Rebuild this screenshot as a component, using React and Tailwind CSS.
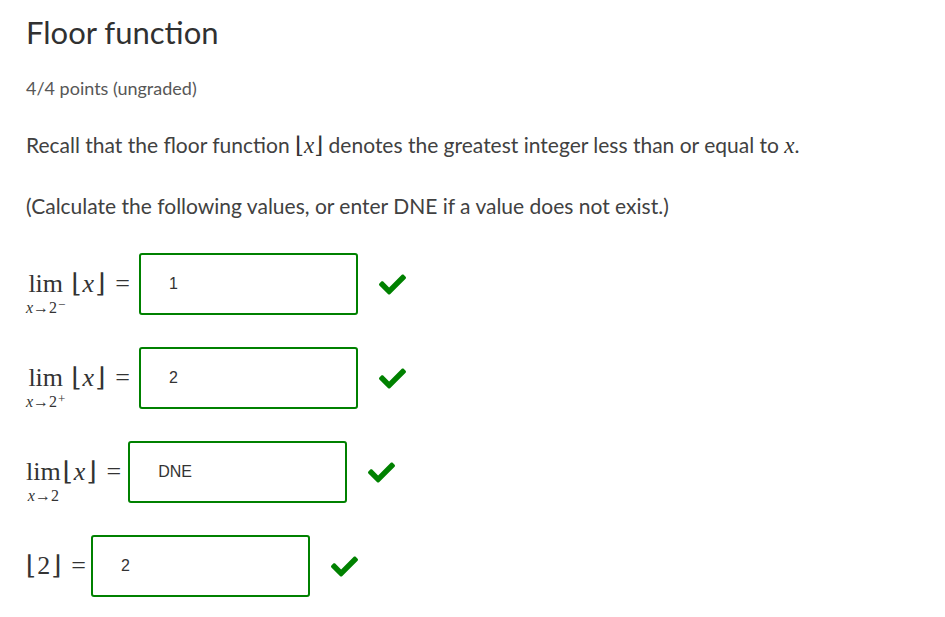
import React from "react";
import { FaCheck } from "react-icons/fa";

const serif = { fontFamily: '"Liberation Serif", "DejaVu Serif", serif' };

function Box({ value, ml }) {
  return (
    <div className={`flex items-center ${ml}`}>
      <div className="w-[219px] h-[62px] border-2 border-[#008100] rounded-[3px] flex items-center pl-[28px] text-[16px] text-[#333] font-['Liberation_Sans',Arial,sans-serif]">
        {value}
      </div>
      <FaCheck className="ml-[21px] text-[#008100]" size={27} />
    </div>
  );
}

function Floor({ children }) {
  return (
    <span className="text-[26px] leading-[30px] text-[#333] whitespace-nowrap" style={serif}>
      <span className="mr-[1px]">⌊</span>
      {children}
      <span className="ml-[1px]">⌋</span>
    </span>
  );
}

function Lim({ sup }) {
  return (
    <span className="inline-flex flex-col items-center" style={serif}>
      <span className="text-[26px] leading-[30px] text-[#333]">lim</span>
      <span className="flex items-start text-[#333] whitespace-nowrap">
        <span className="text-[16px] leading-[18px]">
          <i>x</i>→2
        </span>
        {sup ? <span className="text-[13px] leading-[12px] ml-[1px]">{sup}</span> : null}
      </span>
    </span>
  );
}

function Eq({ ml }) {
  return (
    <span className={`${ml} text-[26px] leading-[30px] text-[#333]`} style={serif}>=</span>
  );
}

function Row({ children }) {
  return <div className="flex items-start h-[62px]">{children}</div>;
}

export default function App() {
  return (
    <div className="w-[945px] h-[617px] bg-white pl-[26px] pt-[12px] text-[#414141] font-['Source_Sans_Pro',Lato,sans-serif]">
      <h1 className="text-[31px] leading-[40px] text-[#313131] font-normal">Floor function</h1>
      <p className="mt-[24px] text-[18px] leading-[24px] text-[#575757]">4/4 points (ungraded)</p>
      <p className="mt-[31px] text-[21px] leading-[28px]">
        Recall that the floor function{" "}
        <span style={serif} className="text-[23px] text-[#333]">⌊<i>x</i>⌋</span>{" "}
        denotes the greatest integer less than or equal to{" "}
        <i style={serif} className="text-[23px] text-[#333]">x</i>.
      </p>
      <p className="mt-[32px] text-[21px] leading-[28px]">
        (Calculate the following values, or enter DNE if a value does not exist.)
      </p>

      <div className="mt-[33px] flex flex-col gap-[32px]">
        <Row>
          <div className="flex items-start mt-[16px]">
            <Lim sup="−" />
            <span className="ml-[6px]"><Floor><i>x</i></Floor></span>
            <Eq ml="ml-[10px]" />
          </div>
          <Box value="1" ml="ml-[9px]" />
        </Row>
        <Row>
          <div className="flex items-start mt-[16px]">
            <Lim sup="+" />
            <span className="ml-[6px]"><Floor><i>x</i></Floor></span>
            <Eq ml="ml-[10px]" />
          </div>
          <Box value="2" ml="ml-[9px]" />
        </Row>
        <Row>
          <div className="flex items-start mt-[16px]">
            <Lim />
            <span className="ml-[2px]"><Floor><i>x</i></Floor></span>
            <Eq ml="ml-[10px]" />
          </div>
          <Box value="DNE" ml="ml-[7px]" />
        </Row>
        <Row>
          <div className="flex items-start mt-[16px]">
            <Floor>2</Floor>
            <Eq ml="ml-[10px]" />
          </div>
          <Box value="2" ml="ml-[5px]" />
        </Row>
      </div>
    </div>
  );
}
